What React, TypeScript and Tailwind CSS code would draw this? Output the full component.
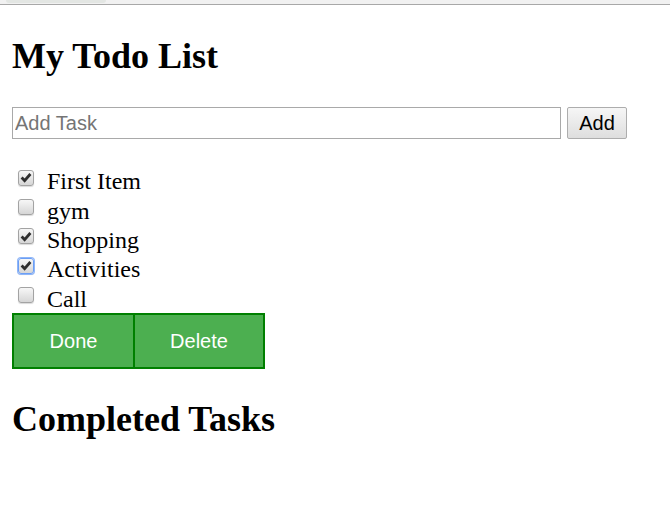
const tasks = [
  { name: "First Item", done: true },
  { name: "gym", done: false },
  { name: "Shopping", done: true },
  { name: "Activities", done: true, focus: true },
  { name: "Call", done: false },
];

function Check({ done, focus }: { done: boolean; focus?: boolean }) {
  return (
    <span
      className={
        "flex h-[16px] w-[16px] shrink-0 items-center justify-center rounded-[3px] border bg-gradient-to-b from-[#f7f7f7] to-[#d6d6d6] shadow-[0_1px_1px_rgba(0,0,0,0.15)] " +
        (focus ? "border-[#6b9ef5] ring-1 ring-[#8fb6f8]" : "border-[#a3a3a3]")
      }
    >
      {done && (
        <svg width="12" height="11" viewBox="0 0 12 11">
          <path d="M1.6 5.6 L4.6 8.6 L10.4 2" fill="none" stroke="#2e2e2e" strokeWidth="2.8" />
        </svg>
      )}
    </span>
  );
}

export default function App() {
  return (
    <div className="min-h-[509px] bg-white text-black">
      <div className="h-[5px] border-b border-[#a8a8a8] bg-[#f1f1f1] pl-[6px]">
        <div className="h-[3px] w-[100px] rounded-b-[3px] bg-[#e3e6e3]"></div>
      </div>

      <div className="px-[12px]">
        <h1 className="mt-[31px] h-[41px] text-[36px] font-bold leading-[41px] font-['Liberation_Serif',serif]">
          My Todo List
        </h1>

        <div className="mt-[30px] flex gap-[6px]">
          <input
            placeholder="Add Task"
            className="h-[32px] w-[549px] border border-[#a9a9a9] px-[2px] text-[20px] outline-none placeholder:text-[#757575] font-['Liberation_Sans',Arial,sans-serif]"
          />
          <button className="h-[32px] w-[60px] rounded-[2px] border border-[#adadad] bg-gradient-to-b from-[#f6f6f6] to-[#dedede] text-[20px] font-['Liberation_Sans',Arial,sans-serif]">
            Add
          </button>
        </div>

        <ul className="mt-[24px] font-['Liberation_Serif',serif] text-[24px]">
          {tasks.map((t) => (
            <li key={t.name} className="flex h-[29.4px] items-center">
              <span className="ml-[6px]">
                <Check done={t.done} focus={t.focus} />
              </span>
              <span className="ml-[13px] mt-[8px] leading-[27px]">{t.name}</span>
            </li>
          ))}
        </ul>

        <div className="mt-[3px] flex font-['Liberation_Sans',Arial,sans-serif] text-[20px] text-white">
          <button className="h-[56px] w-[123px] border-2 border-[#008000] bg-[#4caf50]">Done</button>
          <button className="h-[56px] w-[130px] border-2 border-l-0 border-[#008000] bg-[#4caf50]">Delete</button>
        </div>

        <h2 className="mt-[30px] h-[41px] text-[36px] font-bold leading-[41px] font-['Liberation_Serif',serif]">
          Completed Tasks
        </h2>
      </div>
    </div>
  );
}
